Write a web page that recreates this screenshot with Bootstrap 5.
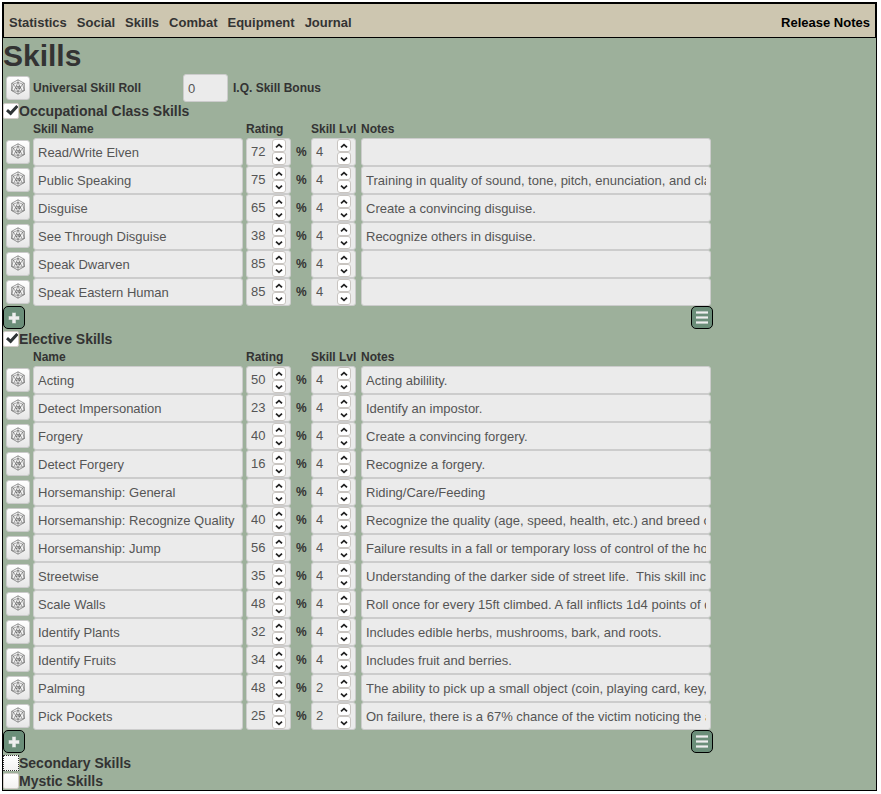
<!DOCTYPE html>
<html lang="en">
<head>
<meta charset="utf-8">
<meta name="viewport" content="width=device-width, initial-scale=1">
<title>Skills</title>
<link rel="stylesheet" href="https://cdn.jsdelivr.net/npm/bootstrap@5.3.0/dist/css/bootstrap.min.css">
<style>
body { background: #fff; color: #333; font: bold 12px/18px "Liberation Sans", Arial, sans-serif; }
.sheet { margin: 2px 4px 2px 2px; border: 1px solid #000; background: #9db09b; }
.sheet-nav { background: #cdc6b0; border: 1px solid #000; font-size: 13px; min-height: 35px; padding: 5px 5px 0; }
.tabs { gap: 10px; }
.sheet-nav .tab { background: none; border: 0; padding: 0; color: #333; font-weight: bold; }
.sheet-nav a { color: #000; text-decoration: none; }
h1 { font-size: 30px; line-height: 36px; font-weight: bold; margin: 0; color: #333; }
h2 { font-size: 14px; line-height: 18px; font-weight: bold; margin: 0; color: #333; }
.field, .stepper { height: 28px; border: 1px solid #ccc; border-radius: 3px; background: #ebebeb; color: #555; }
.field { display: block; width: 100%; padding: 0 4px; font-size: 13px; }
.short { width: 45px; }
.name-field { width: 210px; }
.bonus-label { padding-left: 5px; }
.stepper { width: 45px; padding-right: 4px; }
.stepper input { width: 20px; border: 0; background: none; color: #555; font-size: 13px; padding: 0 0 0 4px; appearance: textfield; -moz-appearance: textfield; }
.stepper input::-webkit-inner-spin-button { appearance: none; margin: 0; }
.step { width: 14px; height: 13px; border: 1px solid #c9c5c1; border-radius: 3px; background: #fff; padding: 0; display: flex; align-items: center; justify-content: center; }
.die { width: 24px; height: 24px; margin: 2px 3px; padding: 0 1px 2px 0; border: 1px solid #cbcbcb; border-radius: 3px; background: linear-gradient(#fff, #e6e6e6); display: flex; align-items: center; justify-content: center; }
.die svg { display: block; }
.skill-table { table-layout: fixed; width: 708px; border-collapse: collapse; }
.skill-table th, .skill-table td { padding: 0; }
.skill-table th { height: 18px; white-space: nowrap; }
.skill-table tr { height: 28px; }
.skill-table thead tr { height: 18px; }
.c-die { width: 30px; } .c-name { width: 213px; } .c-num { width: 50px; } .c-pct { width: 15px; }
.roll-label { width: 150px; }
.toolbar-row { width: 710px; height: 24px; }
.tool { width: 22px; height: 23px; border: 1px solid #000; border-radius: 5px; background: #6b8e79; padding: 0; display: flex; align-items: center; justify-content: center; }
.toggle { appearance: none; -webkit-appearance: none; width: 16px; height: 16px; margin: 0 0 1px; border: 1px solid #d2cdc8; border-radius: 2px; background: linear-gradient(#fff, #f3f2f1); }
.toggle:checked { background: #fff url("data:image/svg+xml,%3Csvg xmlns='http://www.w3.org/2000/svg' viewBox='0 0 14 14'%3E%3Cpath d='M3 6.2L6.6 9.3L13.4 2' fill='none' stroke='%232e3436' stroke-width='3'/%3E%3C/svg%3E") center / 14px 14px no-repeat; }
.toggle.current { border: 1px dotted #333; border-radius: 0; }
</style>
<script src="https://cdn.jsdelivr.net/npm/bootstrap@5.3.0/dist/js/bootstrap.bundle.min.js"></script>
</head>
<body>
<svg class="d-none" aria-hidden="true">
  <symbol id="d20" viewBox="0 0 16 16">
    <g fill="none" stroke="#555" stroke-linejoin="round">
      <path stroke-width=".6" d="M8 .8L14.3 4.3V11.6L8 15.2L1.7 11.6V4.3Z"/>
      <path stroke-width=".5" d="M8 .8V3.4M1.7 4.3L3.4 5M14.3 4.3L12.6 5M1.7 11.6L8 12.4L14.3 11.6M8 12.4V15.2M1.7 11.6L3.4 5L8 3.4L12.6 5L14.3 11.6M3.4 5L8 12.4L12.6 5M8 3.4L4 11.6M8 3.4L12 11.6"/>
      <path stroke-width=".7" d="M6.1 7.1H7.4V8.2L6.1 9.6H7.5M8.6 7.1H9.9V9.6H8.6Z"/>
    </g>
  </symbol>
  <symbol id="up" viewBox="0 0 8 8"><path d="M1 5.4L4 2.6L7 5.4" fill="none" stroke="#222" stroke-width="1.7"/></symbol>
  <symbol id="down" viewBox="0 0 8 8"><path d="M1 2.6L4 5.4L7 2.6" fill="none" stroke="#222" stroke-width="1.7"/></symbol>
  <symbol id="plus" viewBox="0 0 12 12"><path d="M6 .5V11.5M.5 6H11.5" stroke="#a9bab0" stroke-width="4"/><path d="M6 1V11M1 6H11" stroke="#eee" stroke-width="3"/></symbol>
  <symbol id="menu" viewBox="0 0 14 16"><path d="M1 2.5H13M1 7.5H13M1 12.5H13" stroke="#a9bab0" stroke-width="3"/><path d="M1 2.5H13M1 7.5H13M1 12.5H13" stroke="#eee" stroke-width="1.6"/></symbol>
</svg>
<main class="sheet">
  <nav class="sheet-nav d-flex align-items-center justify-content-between" aria-label="Sheet">
    <div class="d-flex tabs">
      <button class="tab" type="button">Statistics</button>
      <button class="tab" type="button">Social</button>
      <button class="tab" type="button">Skills</button>
      <button class="tab" type="button">Combat</button>
      <button class="tab" type="button">Equipment</button>
      <button class="tab" type="button">Journal</button>
    </div>
    <a href="#notes">Release Notes</a>
  </nav>
  <h1>Skills</h1>
  <div class="d-flex align-items-center">
    <button class="die" type="button" aria-label="Universal Skill Roll"><svg width="16" height="16"><use href="#d20"/></svg></button>
    <span class="roll-label">Universal Skill Roll</span>
    <input class="field short" id="iq" value="0">
    <label class="bonus-label" for="iq">I.Q. Skill Bonus</label>
  </div>
  <div id="sections"></div>
  <div class="d-flex align-items-center"><input class="toggle current" type="checkbox" id="secondary"><h2><label for="secondary">Secondary Skills</label></h2></div>
  <div class="d-flex align-items-center"><input class="toggle" type="checkbox" id="mystic"><h2><label for="mystic">Mystic Skills</label></h2></div>
</main>
<script>
const groups = [
  { id: 'occ', title: 'Occupational Class Skills', head: 'Skill Name', rows: [
    ['Read/Write Elven', 72, 4, ''],
    ['Public Speaking', 75, 4, 'Training in quality of sound, tone, pitch, enunciation, and clarity.'],
    ['Disguise', 65, 4, 'Create a convincing disguise.'],
    ['See Through Disguise', 38, 4, 'Recognize others in disguise.'],
    ['Speak Dwarven', 85, 4, ''],
    ['Speak Eastern Human', 85, 4, '']] },
  { id: 'elec', title: 'Elective Skills', head: 'Name', rows: [
    ['Acting', 50, 4, 'Acting abilility.'],
    ['Detect Impersonation', 23, 4, 'Identify an impostor.'],
    ['Forgery', 40, 4, 'Create a convincing forgery.'],
    ['Detect Forgery', 16, 4, 'Recognize a forgery.'],
    ['Horsemanship: General', '', 4, 'Riding/Care/Feeding'],
    ['Horsemanship: Recognize Quality', 40, 4, 'Recognize the quality (age, speed, health, etc.) and breed of a horse.'],
    ['Horsemanship: Jump', 56, 4, 'Failure results in a fall or temporary loss of control of the horse.'],
    ['Streetwise', 35, 4, 'Understanding of the darker side of street life.  This skill includes'],
    ['Scale Walls', 48, 4, 'Roll once for every 15ft climbed. A fall inflicts 1d4 points of damage.'],
    ['Identify Plants', 32, 4, 'Includes edible herbs, mushrooms, bark, and roots.'],
    ['Identify Fruits', 34, 4, 'Includes fruit and berries.'],
    ['Palming', 48, 2, 'The ability to pick up a small object (coin, playing card, key, etc.)'],
    ['Pick Pockets', 25, 2, 'On failure, there is a 67% chance of the victim noticing the attempt.']] }
];
const icon = (name, w, h) => `<svg width="${w}" height="${h}" aria-hidden="true"><use href="#${name}"/></svg>`;
const stepper = (value, label) => `<div class="stepper d-flex align-items-center justify-content-between">
  <input type="number" value="${value}" aria-label="${label}">
  <div><button class="step" type="button" aria-label="Increase">${icon('up', 8, 8)}</button><button class="step" type="button" aria-label="Decrease">${icon('down', 8, 8)}</button></div></div>`;
const row = ([name, rating, level, notes]) => `<tr>
  <td><button class="die" type="button" aria-label="Roll ${name}">${icon('d20', 16, 16)}</button></td>
  <td><input class="field name-field" value="${name}" aria-label="Name"></td>
  <td>${stepper(rating, 'Rating')}</td><td>%</td>
  <td>${stepper(level, 'Skill level')}</td>
  <td><input class="field" value="${notes}" aria-label="Notes"></td></tr>`;
document.getElementById('sections').innerHTML = groups.map(g => `<section>
  <div class="d-flex align-items-center"><input class="toggle" type="checkbox" id="${g.id}" checked><h2><label for="${g.id}">${g.title}</label></h2></div>
  <table class="skill-table">
    <colgroup><col class="c-die"><col class="c-name"><col class="c-num"><col class="c-pct"><col class="c-num"><col></colgroup>
    <thead><tr><th></th><th>${g.head}</th><th>Rating</th><th></th><th>Skill Lvl</th><th>Notes</th></tr></thead>
    <tbody>${g.rows.map(row).join('')}</tbody>
  </table>
  <div class="toolbar-row d-flex justify-content-between">
    <button class="tool" type="button" aria-label="Add skill">${icon('plus', 12, 12)}</button>
    <button class="tool" type="button" aria-label="Modify list">${icon('menu', 14, 16)}</button>
  </div></section>`).join('');
</script>
</body>
</html>
